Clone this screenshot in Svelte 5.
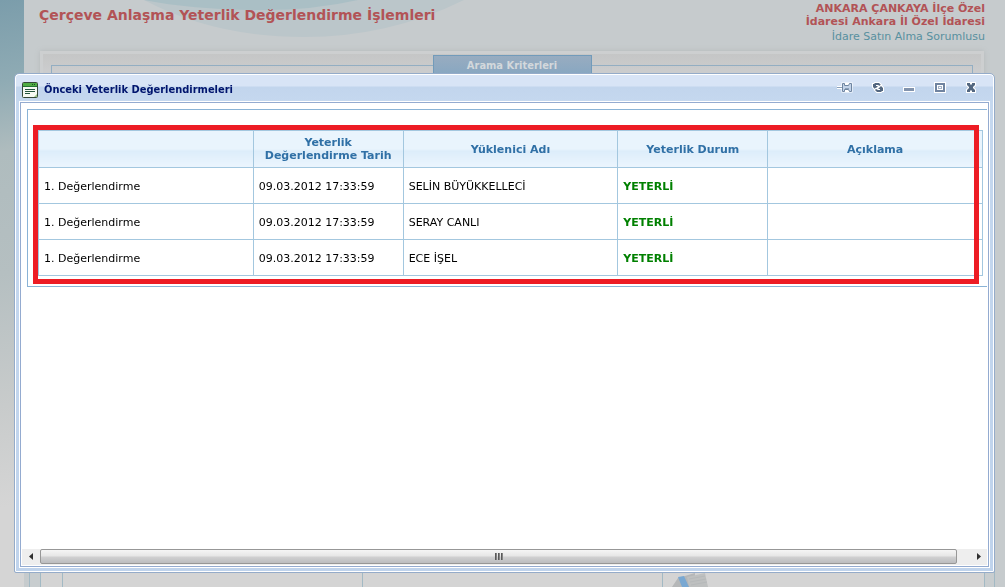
<script lang="ts">
  type Evaluation = {
    label: string;
    date: string;
    contractor: string;
    status: string;
    note: string;
  };

  const columns = ['', 'Yeterlik Değerlendirme Tarih', 'Yüklenici Adı', 'Yeterlik Durum', 'Açıklama'];

  const evaluations: Evaluation[] = [
    { label: '1. Değerlendirme', date: '09.03.2012 17:33:59', contractor: 'SELİN BÜYÜKKELLECİ', status: 'YETERLİ', note: '' },
    { label: '1. Değerlendirme', date: '09.03.2012 17:33:59', contractor: 'SERAY CANLI', status: 'YETERLİ', note: '' },
    { label: '1. Değerlendirme', date: '09.03.2012 17:33:59', contractor: 'ECE İŞEL', status: 'YETERLİ', note: '' }
  ];
</script>

<div class="page">
  <div class="side"></div>
  <main class="content">
    <svg class="swirl" width="400" height="40" viewBox="0 0 400 40" aria-hidden="true">
      <path d="M0 0H320Q245 37 160 37Q70 37 0 0Z" fill="#bbc6ca" />
      <path d="M0 0H214Q170 10 120 10Q50 10 0 0Z" fill="#aabfc5" />
    </svg>
    <header class="page-header">
      <h1>Çerçeve Anlaşma Yeterlik Değerlendirme İşlemleri</h1>
      <div class="account">
        <strong>ANKARA ÇANKAYA İlçe Özel İdaresi Ankara İl Özel İdaresi</strong>
        <span>İdare Satın Alma Sorumlusu</span>
      </div>
    </header>
    <section class="criteria">
      <fieldset>
        <legend>Arama Kriterleri</legend>
      </fieldset>
    </section>
    <section class="results">
      <div class="result-grid">
        <div></div>
        <div></div>
        <div>
          <svg width="42" height="14" viewBox="0 0 42 14" aria-hidden="true">
            <path d="M2 14L8 5L25 0V14Z" fill="#b5b7b8" />
            <path d="M17 4L35 0L38 14H19Z" fill="#bec0c0" />
            <path d="M8 4L14 3L19 14H12Z" fill="#79a8d2" />
            <path d="M19 6L35 3M20 9L36 6M21 12L37 9" stroke="#b6b9ba" fill="none" />
          </svg>
        </div>
      </div>
    </section>
  </main>
</div>

<div class="window" role="dialog" aria-labelledby="window-title">
  <div class="title-bar">
    <svg width="16" height="16" viewBox="0 0 16 16" aria-hidden="true">
      <rect x="0.5" y="0.5" width="15" height="15" rx="1" fill="#f6faf3" stroke="#344838" />
      <path d="M1 1H15V4H1Z" fill="#4fac43" />
      <path d="M1 4.5H15" stroke="#247233" />
      <path d="M10 2.5H11M12 2.5H13" stroke="#174e20" />
      <path d="M3 7.5H13M3 9.5H13M3 11.5H8" stroke="#24563f" />
      <path d="M12 15L15 12V15Z" fill="#9cc68a" />
    </svg>
    <h2 id="window-title">Önceki Yeterlik Değerlendirmeleri</h2>
    <div class="tools">
      <button type="button" aria-label="Sabitle">
        <svg width="18" height="14" viewBox="0 0 18 14">
          <path d="M1 6.5H6M7 3H9V5H12V3H15V10H12V8H9V10H7Z" fill="#fff" stroke="#fff" stroke-width="3" />
          <path d="M1 6.5H6" stroke="#8ba0b9" />
          <path d="M6.5 2.5H8.5V4.5H12.5L13.500 2.500H15.5V10.5H13.5L12.5 8.5H8.5V10.5H6.5Z" fill="#c3d3e8" stroke="#6f85a1" />
          <path d="M9 7.5H13" stroke="#8ba0b9" />
        </svg>
      </button>
      <button type="button" aria-label="Yenile">
        <svg width="14" height="14" viewBox="0 0 14 14">
          <g fill="#536780" stroke="#fff" stroke-width="2" paint-order="stroke">
            <path d="M2 3H3L4 2H8L10 4L9 5L7 4H5V5H7L4 8L2 6Z" />
            <path d="M12 10H11L10 11H6L4 9L5 8L7 9H9V8H7L10 5L12 7Z" />
          </g>
        </svg>
      </button>
      <button type="button" aria-label="Küçült">
        <svg width="14" height="14" viewBox="0 0 14 14">
          <rect x="1" y="6" width="12" height="5" fill="#fff" />
          <rect x="2" y="7" width="10" height="3" fill="#8293ad" />
        </svg>
      </button>
      <button type="button" aria-label="Büyüt">
        <svg width="14" height="14" viewBox="0 0 14 14">
          <rect x="1" y="1" width="12" height="11" fill="#fff" />
          <rect x="3" y="3" width="8" height="7" fill="#fff" stroke="#6f83a0" stroke-width="2" />
          <rect x="5.5" y="5.5" width="3" height="2" fill="#fff" stroke="#a6b4c8" />
        </svg>
      </button>
      <button type="button" aria-label="Kapat">
        <svg width="14" height="14" viewBox="0 0 14 14">
          <path d="M3 2H6V3L7 4L8 3V2H11V4L9 6V7L11 9V11H8V10L7 9L6 10V11H3V9L5 7V6L3 4Z" fill="#536780" stroke="#fff" stroke-width="2" paint-order="stroke" />
        </svg>
      </button>
    </div>
  </div>

  <div class="window-body">
    <div class="panel">
      <div class="table-wrap">
        <table>
          <colgroup>
            <col class="wide" />
            <col class="narrow" />
            <col class="wide" />
            <col class="narrow" />
            <col class="wide" />
          </colgroup>
          <thead>
            <tr>
              {#each columns as column}
                <th scope="col">{column}</th>
              {/each}
            </tr>
          </thead>
          <tbody>
            {#each evaluations as row}
              <tr>
                <td>{row.label}</td>
                <td>{row.date}</td>
                <td>{row.contractor}</td>
                <td class="status">{row.status}</td>
                <td>{row.note}</td>
              </tr>
            {/each}
          </tbody>
        </table>
        <div class="highlight"></div>
      </div>
    </div>
    <div class="scrollbar">
      <button type="button" aria-label="Sola kaydır">
        <svg width="5" height="8" viewBox="0 0 5 8"><path d="M4 0V7L0 3.5Z" fill="#303030" /></svg>
      </button>
      <div class="track">
        <div class="thumb"><i></i><i></i><i></i></div>
      </div>
      <button type="button" aria-label="Sağa kaydır">
        <svg width="5" height="8" viewBox="0 0 5 8"><path d="M1 0V7L5 3.5Z" fill="#303030" /></svg>
      </button>
    </div>
  </div>
</div>

<style>
  :global(body) {
    margin: 0;
    overflow: hidden;
    font-family: Verdana, 'DejaVu Sans', sans-serif;
    font-size: 11px;
    background: #c6cbcd;
  }

  .page {
    display: flex;
    height: 100vh;
  }

  .side {
    flex: 0 0 24px;
    background: linear-gradient(170deg, #7b9dab 0, #8fabb4 80px, #afbcbe 150px, #b5bfc1 270px, #c8cbcb 400px, #d5d5d5 500px);
  }

  .content {
    position: relative;
    flex: 1;
    display: flex;
    flex-direction: column;
    min-width: 0;
  }

  .swirl {
    position: absolute;
    top: 0;
    left: 120px;
  }

  .page-header {
    position: relative;
    display: flex;
    justify-content: space-between;
    height: 51px;
    padding: 0 20px 0 15px;
    box-sizing: border-box;
  }

  h1 {
    margin: 0;
    padding-top: 6px;
    font-size: 14px;
    line-height: 18px;
    color: #b25356;
  }

  .account {
    display: flex;
    flex-direction: column;
    width: 200px;
    padding-top: 2px;
    text-align: right;
    line-height: 13px;
    color: #b25356;
  }

  .account span {
    line-height: 17px;
    color: #58909f;
  }

  .criteria {
    flex: 1;
    margin: 0 21px 0 16px;
    padding: 1px 8px 0;
    border: 3px solid #cdcfd0;
    background: linear-gradient(#c5c6c6, #cbcccd 16px);
    box-shadow: 0 0 5px #b5b9ba;
  }

  fieldset {
    height: 100%;
    margin: 0;
    padding: 0;
    border: 1px solid #93aec2;
    box-sizing: border-box;
  }

  legend {
    width: 159px;
    height: 20px;
    margin: 0 auto;
    padding: 0;
    border: 1px solid #729bba;
    box-sizing: border-box;
    background: linear-gradient(#98acc0, #88a7c1);
    font-family: Tahoma, 'DejaVu Sans Condensed', 'DejaVu Sans', sans-serif;
    font-weight: bold;
    line-height: 20px;
    text-align: center;
    color: #d3d8dc;
  }

  .results {
    position: relative;
    height: 30px;
    margin: 0 10px 0 5px;
    padding: 0 9px 0 10px;
    border: 1px solid #a2b9c4;
    border-width: 0 1px;
    background: #c8cdcf;
  }

  .result-grid {
    display: grid;
    grid-template-columns: 300px 300px 1fr;
    height: 100%;
    padding-left: 21px;
    border: 1px solid #a2b9c4;
    border-width: 0 1px;
    background: #d4d4d4;
  }

  .result-grid div {
    display: flex;
    align-items: flex-end;
    padding-left: 7px;
    border-left: 1px solid #a2b9c4;
  }

  .window {
    position: fixed;
    inset: 73px 10px 14px 14px;
    display: flex;
    flex-direction: column;
    padding: 0 5px 5px;
    border: 1px solid #94abc9;
    border-radius: 5px 5px 2px 2px;
    box-sizing: border-box;
    background: linear-gradient(#d8e4f6 12px, #c2d5ed 13px, #c5d8ef 28px, #bfd3ec);
    box-shadow: inset 0 0 0 1px #fff;
  }

  .title-bar {
    display: flex;
    align-items: center;
    height: 28px;
    padding: 3px 11px 0 2px;
    box-sizing: border-box;
  }

  h2 {
    margin: 0 0 0 6px;
    font-family: Tahoma, 'DejaVu Sans Condensed', 'DejaVu Sans', sans-serif;
    font-size: 11px;
    line-height: 16px;
    color: #00156e;
  }

  .tools {
    display: flex;
    gap: 17px;
    margin-left: auto;
    padding-bottom: 4px;
  }

  button {
    display: flex;
    align-items: center;
    justify-content: center;
    padding: 0;
    border: 0;
    background: transparent;
  }

  .window-body {
    flex: 1;
    display: flex;
    flex-direction: column;
    justify-content: space-between;
    min-height: 0;
    padding: 6px 1px 1px;
    border: 1px solid #94abd0;
    background: #fff;
    box-shadow: 0 0 0 1px #fff;
  }

  .panel {
    margin-left: 5px;
    padding: 20px 4px 10px 10px;
    border: 1px solid #8ab3d6;
    border-right: 0;
  }

  .table-wrap {
    position: relative;
  }

  table {
    width: 100%;
    border-collapse: collapse;
    table-layout: fixed;
  }

  .narrow {
    width: 150px;
  }

  th,
  td {
    box-sizing: border-box;
    padding: 0 5px;
    border: 1px solid #a3c7df;
    line-height: 13px;
  }

  th {
    height: 37px;
    background: linear-gradient(#e9f4fd 18px, #dcedfa 19px, #eaf4fd 34px);
    color: #3070a6;
  }

  td {
    height: 36px;
    padding-top: 2px;
    color: #000;
  }

  td.status {
    font-weight: bold;
    color: #008000;
  }

  .highlight {
    position: absolute;
    inset: -5px 4px -8px -5px;
    border: 5px solid #ed1c24;
    pointer-events: none;
  }

  .scrollbar {
    display: flex;
    height: 16px;
    background: #eeeeee;
  }

  .scrollbar button {
    flex: 0 0 18px;
  }

  .track {
    flex: 1;
    padding-right: 12px;
  }

  .thumb {
    display: flex;
    align-items: center;
    justify-content: center;
    gap: 1px;
    height: 15px;
    border: 1px solid #979797;
    border-radius: 2px;
    box-sizing: border-box;
    background: linear-gradient(#f5f5f5, #e6e6e6 6px, #d0d0d1 7px, #bcbdbf);
  }

  .thumb i {
    width: 2px;
    height: 7px;
    background: linear-gradient(90deg, #444, #999);
  }
</style>
